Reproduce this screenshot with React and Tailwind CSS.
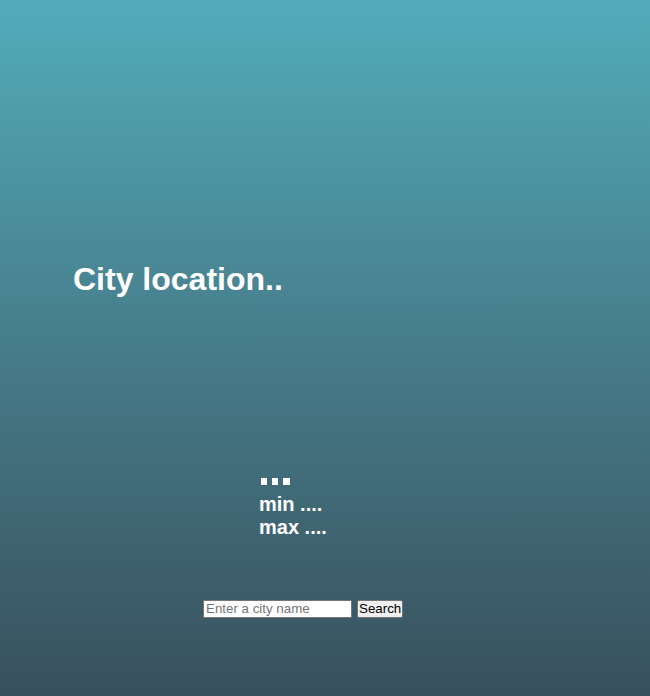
export default function App() {
  return (
    <div
      className="h-[696px] w-full flex flex-col text-white bg-gradient-to-b from-[#52acba] to-[#38505d]"
      style={{ fontFamily: '"Liberation Sans", Arial, sans-serif' }}
    >
      <h1 className="mt-[261px] ml-[73px] text-[32px] leading-[37px] font-bold">City location..</h1>
      <div className="mt-[172px] ml-[259px] text-[20px] leading-[23px] font-bold">
        <div className="h-[23px] flex items-start gap-[5px] pt-[8px] pl-[2px]">
          <span className="block w-[6px] h-[7px] bg-white"></span>
          <span className="block w-[6px] h-[7px] bg-white"></span>
          <span className="block w-[7px] h-[7px] bg-white"></span>
        </div>
        <div>min ....</div>
        <div>max ....</div>
      </div>
      <div className="mt-[61px] ml-[203px] flex items-center gap-[5px] text-[13.33px]" style={{ fontFamily: 'Arial, "Liberation Sans", sans-serif' }}>
        <input
          type="text"
          placeholder="Enter a city name"
          className="w-[149px] h-[18px] bg-white text-black border border-[#767676] px-[2px] placeholder:text-[#757575] outline-none"
        />
        <button className="h-[18px] px-[1px] bg-[#efefef] text-black border border-[#767676] rounded-[2px] leading-none">
          Search
        </button>
      </div>
    </div>
  );
}
